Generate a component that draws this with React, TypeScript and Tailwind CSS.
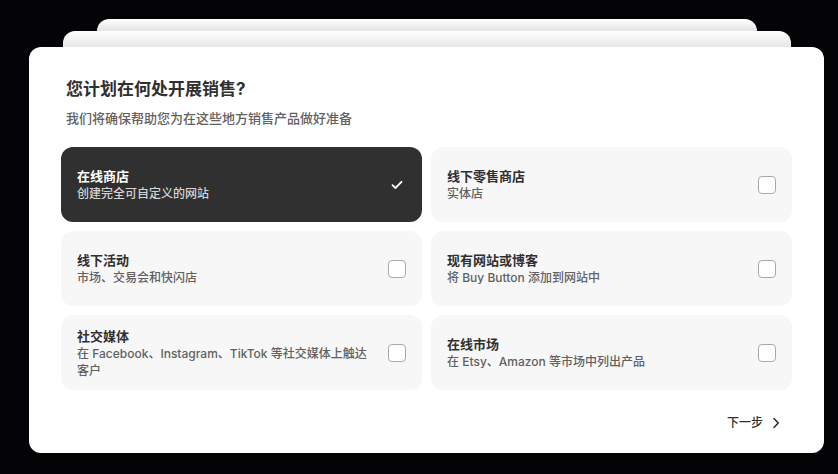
import React, { useState } from 'react';

interface Option {
    id: string;
    title: string;
    desc: string;
}

const OPTIONS: Option[] = [
    { id: 'online', title: '在线商店', desc: '创建完全可自定义的网站' },
    { id: 'retail', title: '线下零售商店', desc: '实体店' },
    { id: 'events', title: '线下活动', desc: '市场、交易会和快闪店' },
    { id: 'existing', title: '现有网站或博客', desc: '将 Buy Button 添加到网站中' },
    { id: 'social', title: '社交媒体', desc: '在 Facebook、Instagram、TikTok 等社交媒体上触达客户' },
    { id: 'market', title: '在线市场', desc: '在 Etsy、Amazon 等市场中列出产品' }
];

const CheckMark = () => (
    <svg width="12" height="10" viewBox="0 0 12 10" fill="none">
        <path d="M1.5 5.2 L4.4 8 L10.5 1.8" stroke="white" strokeWidth="1.8" strokeLinecap="round" strokeLinejoin="round" />
    </svg>
);

const Chevron = () => (
    <svg width="8" height="12" viewBox="0 0 8 12" fill="none">
        <path d="M2 1.5 L6.2 6 L2 10.5" stroke="#303030" strokeWidth="1.6" strokeLinecap="round" strokeLinejoin="round" />
    </svg>
);

const App = () => {
    const [selected, setSelected] = useState<string[]>(['online']);

    const toggle = (id: string) =>
        setSelected(prev => (prev.includes(id) ? prev.filter(x => x !== id) : [...prev, id]));

    return (
        <div
            className="w-full h-[474px] bg-[#040406] pt-[19px] overflow-hidden"
            style={{ fontFamily: 'Inter, "Noto Sans CJK SC", sans-serif' }}
        >
            {/* stacked cards behind */}
            <div className="ml-[97px] w-[660px] h-[12px] rounded-t-[12px] bg-gradient-to-b from-white to-[#e4e4e6]" />
            <div className="ml-[63px] w-[728px] h-[16px] rounded-t-[12px] bg-gradient-to-b from-white to-[#e6e6e8]" />

            <div className="ml-[29px] w-[795px] h-[406px] bg-white rounded-[12px] pt-[28px] px-8 pb-4 flex flex-col">
                <div className="pl-[5px]">
                    <h1 className="text-[17px] leading-[28px] font-bold text-[#303030]">您计划在何处开展销售?</h1>
                    <p className="mt-[5px] text-[13px] leading-[20px] font-medium text-[#616161]">
                        我们将确保帮助您为在这些地方销售产品做好准备
                    </p>
                </div>

                <div className="mt-[19px] grid grid-cols-2 gap-[9px]">
                    {OPTIONS.map(o => {
                        const on = selected.includes(o.id);
                        return (
                            <button
                                key={o.id}
                                type="button"
                                onClick={() => toggle(o.id)}
                                className={`h-[75px] rounded-[12px] px-4 flex items-center justify-between gap-4 text-left ${on ? 'bg-[#303030]' : 'bg-[#f7f7f7]'}`}
                            >
                                <div className="flex-1 min-w-0">
                                    <div className={`text-[13px] leading-[18px] font-semibold ${on ? 'text-white' : 'text-[#303030]'}`}>{o.title}</div>
                                    <div className={`text-[12px] leading-[17px] font-medium ${on ? 'text-[#d4d4d4]' : 'text-[#616161]'}`}>{o.desc}</div>
                                </div>
                                {on ? (
                                    <div className="w-[18px] h-[18px] flex items-center justify-center shrink-0">
                                        <CheckMark />
                                    </div>
                                ) : (
                                    <div className="w-[18px] h-[18px] shrink-0 rounded-[4px] border border-[#a9a9a9] bg-white" />
                                )}
                            </button>
                        );
                    })}
                </div>

                <div className="mt-[19px] flex justify-end">
                    <button type="button" className="h-7 pl-3 pr-[12px] flex items-center gap-[9px] text-[12px] font-medium text-[#303030]">
                        下一步
                        <Chevron />
                    </button>
                </div>
            </div>
        </div>
    );
};

export default App;
